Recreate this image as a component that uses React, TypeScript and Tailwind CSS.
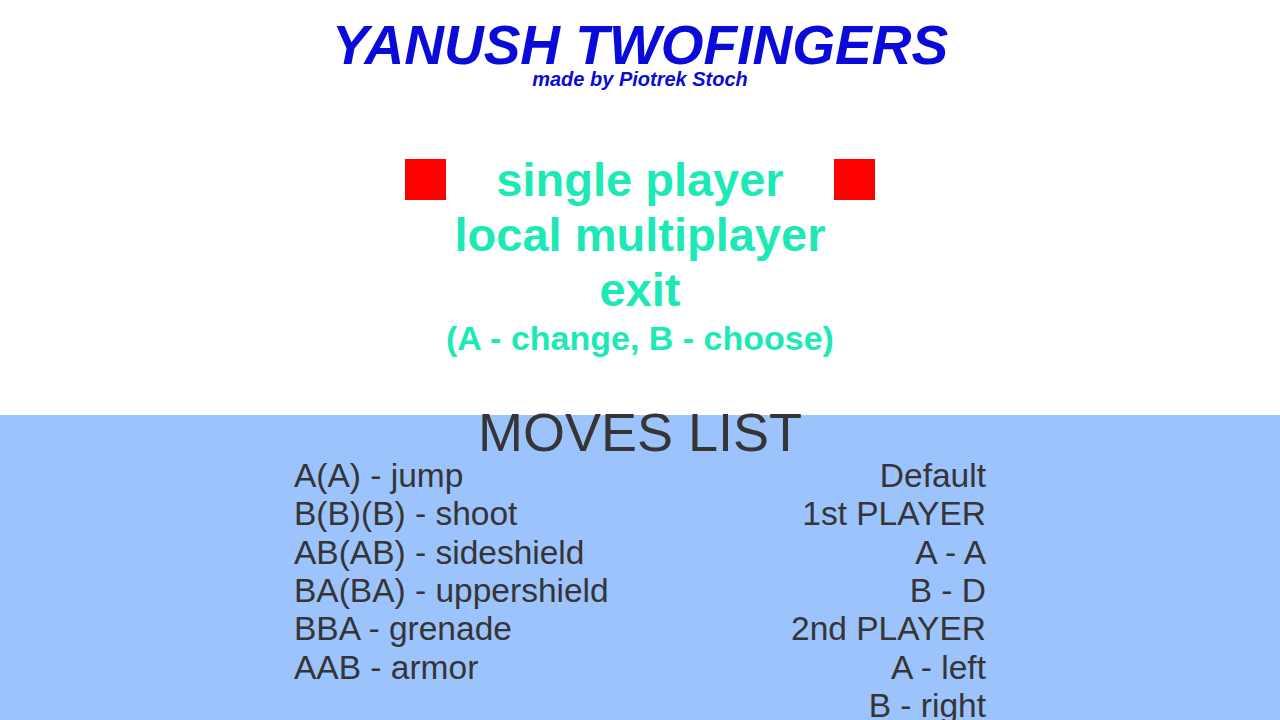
const moves = [
  'A(A) - jump',
  'B(B)(B) - shoot',
  'AB(AB) - sideshield',
  'BA(BA) - uppershield',
  'BBA - grenade',
  'AAB - armor',
]

const controls = ['Default', '1st PLAYER', 'A - A', 'B - D', '2nd PLAYER', 'A - left', 'B - right']

function Marker() {
  return <div className="h-[41px] w-[41px] bg-[#ff0000]" />
}

export default function App() {
  return (
    <div className="flex min-h-screen flex-col bg-white font-['Liberation_Sans',Arial,sans-serif]">
      {/* title + main menu */}
      <header className="flex flex-col items-center pb-[58px] pt-[20px] text-center">
        <h1 className="text-[55px] font-bold italic leading-[50px] text-[#0b0bd9]">YANUSH TWOFINGERS</h1>
        <p className="mt-[1px] text-[20px] font-bold italic leading-[17px] text-[#0b0bd9]">made by Piotrek Stoch</p>

        <nav className="mt-[64px] flex flex-col items-center font-bold text-[#1de9b6]">
          <div className="flex items-center gap-[50px]">
            <Marker />
            <span className="text-[47px] leading-[55px]">single player</span>
            <Marker />
          </div>
          <span className="text-[47px] leading-[55px]">local multiplayer</span>
          <span className="text-[47px] leading-[55px]">exit</span>
          <span className="mt-[2px] text-[34px] leading-[38px]">(A - change, B - choose)</span>
        </nav>
      </header>

      {/* moves list panel */}
      <section className="flex flex-1 flex-col items-center bg-[#9dc3fd] text-[#353535]">
        <h2 className="mt-[-10px] text-[54px] leading-[54px]">MOVES LIST</h2>
        <div className="mt-[-2px] flex w-[692px] justify-between text-[33.5px] leading-[38.33px]">
          <ul className="flex flex-col">
            {moves.map((m) => (
              <li key={m}>{m}</li>
            ))}
          </ul>
          <ul className="flex flex-col items-end text-right">
            {controls.map((c) => (
              <li key={c}>{c}</li>
            ))}
          </ul>
        </div>
      </section>
    </div>
  )
}
